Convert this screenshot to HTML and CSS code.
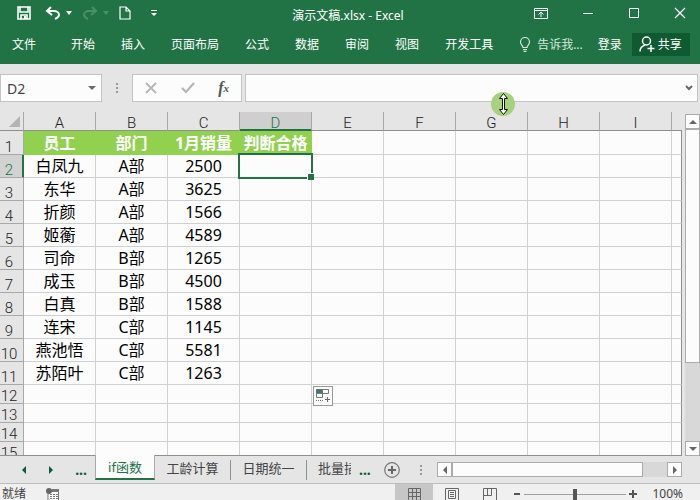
FILE: index.html
```html
<!DOCTYPE html>
<html lang="zh-CN">
<head>
    <meta charset="UTF-8">
    <meta name="viewport" content="width=device-width, initial-scale=1.0">
    <title>演示文稿.xlsx - Excel</title>
    <link rel="stylesheet" href="styles.css">
</head>
<body>

<header class="header">
    <div class="titlebar">
        <div class="quick">
            <button class="icon-btn" aria-label="保存"><svg width="14" height="14" viewBox="0 0 14 14"><path d="M1 1h12v12H1z M3 1v5h8V1 M4 13V9h6v4" fill="none" stroke="#fff" stroke-width="1.6"/><path d="M7 10h2v3H7z" fill="#fff"/></svg></button>
            <button class="icon-btn" aria-label="撤消"><svg width="16" height="14" viewBox="0 0 16 14"><path d="M6 1L2 5l5 4M2 5h7c3 0 5 2 5 4s-2 3-4 4" fill="none" stroke="#fff" stroke-width="2"/></svg></button>
            <button class="icon-btn caret" aria-label="撤消列表"><svg width="6" height="4" viewBox="0 0 6 4"><path d="M0 0h6L3 4z" fill="#fff"/></svg></button>
            <button class="icon-btn redo" aria-label="恢复"><svg width="16" height="14" viewBox="0 0 16 14"><path d="M10 1l4 4-5 4M14 5H7C4 5 2 7 2 9s2 3 4 4" fill="none" stroke="#4c9069" stroke-width="2"/></svg></button>
            <button class="icon-btn caret" aria-label="恢复列表"><svg width="6" height="4" viewBox="0 0 6 4"><path d="M0 0h6L3 4z" fill="#4c9069"/></svg></button>
            <button class="icon-btn new" aria-label="新建"><svg width="12" height="14" viewBox="0 0 12 14"><path d="M1 1h6l4 4v8H1z M7 1v4h4" fill="none" stroke="#fff" stroke-width="1.2"/></svg></button>
            <button class="icon-btn more" aria-label="自定义快速访问工具栏"><svg width="6" height="7" viewBox="0 0 6 7"><path d="M0 0h6v1H0z M0 3h6L3 6z" fill="#fff"/></svg></button>
        </div>
        <h1>演示文稿.xlsx - Excel</h1>
        <div class="window">
            <button class="icon-btn" aria-label="功能区显示选项"><svg width="14" height="11" viewBox="0 0 14 11"><path d="M.5.5h13v10H.5z M.5 2.5h13 M7 9V4 M4.500 6.500L7 4l2.500 2.500" fill="none" stroke="#fff"/></svg></button>
            <button class="icon-btn" aria-label="最小化"><svg width="12" height="12" viewBox="0 0 12 12"><path d="M1 6.500h10" stroke="#fff"/></svg></button>
            <button class="icon-btn" aria-label="最大化"><svg width="12" height="12" viewBox="0 0 12 12"><path d="M1.500 1.500h9v9h-9z" fill="none" stroke="#fff"/></svg></button>
            <button class="icon-btn" aria-label="关闭"><svg width="12" height="12" viewBox="0 0 12 12"><path d="M1 1l10 10M11 1L1 11" stroke="#fff" stroke-width="1.200"/></svg></button>
        </div>
    </div>
    <nav class="ribbon">
        <a href="#" class="file">文件</a>
        <a href="#">开始</a>
        <a href="#">插入</a>
        <a href="#">页面布局</a>
        <a href="#">公式</a>
        <a href="#">数据</a>
        <a href="#">审阅</a>
        <a href="#">视图</a>
        <a href="#">开发工具</a>
        <div class="account">
            <a href="#" class="tell"><svg width="12" height="15" viewBox="0 0 12 15"><path d="M4 10.500c0-2-2.500-2.500-2.500-5.500a4.500 4.500 0 0 1 9 0c0 3-2.500 3.500-2.500 5.500z M4 12.500h4 M4.500 14.300h3" fill="none" stroke="#d5e8dc" stroke-width="1.200"/></svg>告诉我...</a>
            <a href="#">登录</a>
            <button class="share"><svg width="16" height="16" viewBox="0 0 16 16"><circle cx="7.500" cy="5" r="4" fill="none" stroke="#fff" stroke-width="1.500"/><path d="M1 15.500c0-3.500 2-5.500 5-6.500 M12 9v7 M8.500 12.500h7" fill="none" stroke="#fff" stroke-width="1.500"/></svg>共享</button>
        </div>
    </nav>
</header>

<section class="formula">
    <div class="box name-box">
        <input type="text" value="D2" aria-label="名称框">
        <button class="icon-btn" aria-label="名称列表"><svg width="8" height="4" viewBox="0 0 8 4"><path d="M0 0h8L4 4z" fill="#6a6a6a"/></svg></button>
    </div>
    <span class="dots"></span>
    <div class="box tools">
        <button class="icon-btn" aria-label="取消"><svg width="12" height="12" viewBox="0 0 12 12"><path d="M1 1l10 10M11 1L1 11" stroke="#b5b5b5" stroke-width="1.800"/></svg></button>
        <button class="icon-btn" aria-label="输入"><svg width="14" height="12" viewBox="0 0 14 12"><path d="M1 6l4 4 8-9" fill="none" stroke="#b5b5b5" stroke-width="2.200"/></svg></button>
        <button class="icon-btn fx" aria-label="插入函数"><i>f</i><sub>x</sub></button>
    </div>
    <div class="box input-box">
        <input type="text" aria-label="编辑栏">
        <button class="icon-btn" aria-label="展开编辑栏"><svg width="8" height="6" viewBox="0 0 8 6"><path d="M1 1l3 3 3-3" fill="none" stroke="#666" stroke-width="2"/></svg></button>
    </div>
    <svg class="pointer" width="24" height="24" viewBox="0 0 24 24"><circle cx="12" cy="12" r="12" fill="#a8d17c"/><path d="M12.500 1.500l4 5h-3v11h3l-4 5-4-5h3v-11h-3z" fill="#fff" stroke="#111"/></svg>
</section>

<main class="sheet">
    <div class="grid">
        <table>
            <colgroup>
                <col class="col-num">
                <col class="col"><col class="col"><col class="col"><col class="col"><col class="col"><col class="col"><col class="col"><col class="col"><col class="col">
                <col>
            </colgroup>
            <thead>
                <tr><th class="corner"><svg width="11" height="11" viewBox="0 0 11 11"><path d="M11 0v11H0z" fill="#b4b4b4"/></svg></th><th>A</th><th>B</th><th>C</th><th class="on">D</th><th>E</th><th>F</th><th>G</th><th>H</th><th>I</th><th></th></tr>
            </thead>
            <tbody>
                <tr class="title"><th>1</th><td>员工</td><td>部门</td><td>1月销量</td><td>判断合格</td><td></td><td></td><td></td><td></td><td></td><td></td></tr>
                <tr><th class="on">2</th><td>白凤九</td><td>A部</td><td>2500</td><td class="selected"><div class="frame"></div></td><td></td><td></td><td></td><td></td><td></td><td></td></tr>
                <tr><th>3</th><td>东华</td><td>A部</td><td>3625</td><td></td><td></td><td></td><td></td><td></td><td></td><td></td></tr>
                <tr><th>4</th><td>折颜</td><td>A部</td><td>1566</td><td></td><td></td><td></td><td></td><td></td><td></td><td></td></tr>
                <tr><th>5</th><td>姬蘅</td><td>A部</td><td>4589</td><td></td><td></td><td></td><td></td><td></td><td></td><td></td></tr>
                <tr><th>6</th><td>司命</td><td>B部</td><td>1265</td><td></td><td></td><td></td><td></td><td></td><td></td><td></td></tr>
                <tr><th>7</th><td>成玉</td><td>B部</td><td>4500</td><td></td><td></td><td></td><td></td><td></td><td></td><td></td></tr>
                <tr><th>8</th><td>白真</td><td>B部</td><td>1588</td><td></td><td></td><td></td><td></td><td></td><td></td><td></td></tr>
                <tr><th>9</th><td>连宋</td><td>C部</td><td>1145</td><td></td><td></td><td></td><td></td><td></td><td></td><td></td></tr>
                <tr><th>10</th><td>燕池悟</td><td>C部</td><td>5581</td><td></td><td></td><td></td><td></td><td></td><td></td><td></td></tr>
                <tr><th>11</th><td>苏陌叶</td><td>C部</td><td>1263</td><td></td><td></td><td></td><td></td><td></td><td></td><td></td></tr>
                <tr class="short"><th>12</th><td></td><td></td><td></td><td></td><td class="anchor"><button class="fill-options" aria-label="自动填充选项"><svg width="14" height="14" viewBox="0 0 14 14"><path d="M.5.5h6v4h-6z" fill="#3d7a78" stroke="#5f6f7a"/><path d="M6.500.500h6v4h-6z M.5 4.500h6v4h-6z" fill="#fff" stroke="#777"/><path d="M0 11.500h7" stroke="#777" stroke-dasharray="1 1"/><path d="M11.500 8v5 M9 10.500h5" stroke="#666"/></svg></button></td><td></td><td></td><td></td><td></td><td></td></tr>
                <tr class="short"><th>13</th><td></td><td></td><td></td><td></td><td></td><td></td><td></td><td></td><td></td><td></td></tr>
                <tr class="short"><th>14</th><td></td><td></td><td></td><td></td><td></td><td></td><td></td><td></td><td></td><td></td></tr>
                <tr class="short"><th>15</th><td></td><td></td><td></td><td></td><td></td><td></td><td></td><td></td><td></td><td></td></tr>
            </tbody>
        </table>
    </div>
    <div class="vscroll">
        <button class="icon-btn scroll-btn" aria-label="向上"><svg width="8" height="4" viewBox="0 0 8 4"><path d="M0 4h8L4 0z" fill="#666"/></svg></button>
        <div class="track"><div class="thumb"></div></div>
        <button class="icon-btn scroll-btn" aria-label="向下"><svg width="8" height="4" viewBox="0 0 8 4"><path d="M0 0h8L4 4z" fill="#666"/></svg></button>
    </div>
</main>

<section class="tabs">
    <div class="tab-nav">
        <button class="icon-btn" aria-label="上一个"><svg width="4" height="8" viewBox="0 0 4 8"><path d="M4 0v8L0 4z" fill="#0f5a34"/></svg></button>
        <button class="icon-btn" aria-label="下一个"><svg width="4" height="8" viewBox="0 0 4 8"><path d="M0 0v8l4-4z" fill="#0f5a34"/></svg></button>
        <button class="icon-btn ellipsis">...</button>
    </div>
    <button class="tab active">if函数</button>
    <button class="tab">工龄计算</button>
    <button class="tab">日期统一</button>
    <button class="tab cut">批量插入</button>
    <button class="icon-btn ellipsis">...</button>
    <button class="icon-btn add" aria-label="新工作表"><svg width="16" height="16" viewBox="0 0 16 16"><circle cx="8" cy="8" r="7.300" fill="none" stroke="#777" stroke-width="1.200"/><path d="M8 4v8 M4 8h8" stroke="#666" stroke-width="2"/></svg></button>
    <span class="dots"></span>
    <div class="hscroll">
        <button class="icon-btn scroll-btn" aria-label="向左"><svg width="4" height="8" viewBox="0 0 4 8"><path d="M4 0v8L0 4z" fill="#666"/></svg></button>
        <div class="track"><div class="thumb"></div></div>
        <button class="icon-btn scroll-btn" aria-label="向右"><svg width="4" height="8" viewBox="0 0 4 8"><path d="M0 0v8l4-4z" fill="#666"/></svg></button>
    </div>
</section>

<footer class="status">
    <span>就绪</span>
    <button class="icon-btn macro" aria-label="录制宏"><svg width="13" height="13" viewBox="0 0 13 13"><path d="M2 2h10.500v10.500H2z" fill="#fff" stroke="#777"/><path d="M6 1h7v3H6z" fill="#777"/><path d="M4 6.500h8 M4 8.500h8 M4 10.500h8" stroke="#777" stroke-dasharray="2 1"/><circle cx="3" cy="3" r="3" fill="#666"/></svg></button>
    <div class="views">
        <button class="icon-btn on" aria-label="普通"><svg width="13" height="13" viewBox="0 0 13 13"><path d="M.5.5h12v12H.5z M4.500 0v13 M8.500 0v13 M0 4.500h13 M0 8.500h13" fill="none" stroke="#666"/></svg></button>
        <button class="icon-btn" aria-label="页面布局"><svg width="14" height="13" viewBox="0 0 14 13"><path d="M.5.5h13v12H.5z M3.500 2.500h7v8h-7z M5 4.500h4 M5 6.500h4 M5 8.500h4" fill="none" stroke="#666"/></svg></button>
        <button class="icon-btn" aria-label="分页预览"><svg width="14" height="13" viewBox="0 0 14 13"><path d="M.5.5h13v12H.5z M.5 7.500h8V.5 M4.500.500v7" fill="none" stroke="#666"/></svg></button>
    </div>
    <div class="zoom">
        <button class="icon-btn" aria-label="缩小"><svg width="8" height="8" viewBox="0 0 8 8"><path d="M1 4h6" stroke="#555" stroke-width="2"/></svg></button>
        <input type="range" min="0" max="100" value="50" aria-label="缩放">
        <button class="icon-btn" aria-label="放大"><svg width="8" height="8" viewBox="0 0 8 8"><path d="M0 4h8 M4 0v8" stroke="#555" stroke-width="2"/></svg></button>
        <span class="percent">100%</span>
    </div>
</footer>

</body>
</html>
```
FILE: styles.css
```css
* {
    box-sizing: border-box;
}
body {
    margin: 0;
    height: 100vh;
    display: flex;
    flex-direction: column;
    overflow: hidden;
    background-color: #e5e5e5;
    font-family: "Noto Sans", "Noto Sans CJK SC", sans-serif;
    font-size: 12px;
    color: #444;
}
button, input {
    font: inherit;
    color: inherit;
    margin: 0;
    padding: 0;
    border: none;
    background: none;
}
a {
    color: inherit;
    text-decoration: none;
}
.icon-btn {
    display: flex;
    align-items: center;
    justify-content: center;
    flex: none;
}

/* title bar and ribbon */
.header {
    flex: none;
    height: 64px;
    background-color: #217346;
    color: #fff;
}
.titlebar {
    display: grid;
    grid-template-columns: 1fr auto 1fr;
    align-items: center;
    height: 30px;
    padding: 0 14px 4px 10px;
}
.titlebar h1 {
    margin: 0;
    padding-top: 6px;
    font-size: 12px;
    line-height: 20px;
    font-weight: normal;
}
.quick {
    display: flex;
    align-items: center;
    padding-left: 7px;
}
.quick .icon-btn {
    margin-right: 14px;
}
.quick .icon-btn:nth-child(2),
.quick .redo {
    margin-right: 5px;
}
.quick .caret {
    margin-right: 10px;
}
.quick .new {
    margin-right: 20px;
}
.window {
    display: flex;
    justify-content: flex-end;
    gap: 34px;
}
.ribbon {
    display: flex;
    align-items: center;
    gap: 26px;
    height: 28px;
    padding: 0 13px 0 12px;
    white-space: nowrap;
}
.ribbon .file {
    margin-right: 9px;
}
.account {
    display: flex;
    align-items: center;
    gap: 10px;
    margin-left: auto;
}
.tell {
    display: flex;
    align-items: center;
    gap: 6px;
    margin-right: 5px;
    color: #d5e8dc;
}
.share {
    display: flex;
    align-items: center;
    gap: 3px;
    height: 23px;
    padding: 0 8px 0 7px;
    background-color: #0f5a30;
}

/* formula bar */
.formula {
    position: relative;
    flex: none;
    display: flex;
    height: 48px;
    padding: 10px 2px 10px 0;
}
.box {
    display: flex;
    align-items: center;
    height: 28px;
    border: 1px solid #c3c3c3;
    background-color: #fcfcfc;
}
.box input {
    flex: 1;
    min-width: 0;
    outline: none;
}
.name-box {
    width: 102px;
    padding: 0 5px 0 6px;
    font-size: 14px;
}
.dots {
    flex: none;
    width: 2px;
    height: 10px;
    background: repeating-linear-gradient(#999 0 2px, transparent 2px 4px);
}
.formula .dots {
    margin: 9px 14px 0;
}
.tools {
    width: 110px;
    padding: 0 12px;
    justify-content: space-between;
}
.fx {
    font-family: "Liberation Serif", serif;
    font-size: 16px;
    font-weight: bold;
    color: #555;
}
.fx sub {
    font-size: 11px;
    font-style: italic;
}
.input-box {
    flex: 1;
    margin-left: 3px;
    padding: 0 4px;
}
.pointer {
    position: absolute;
    left: 491px;
    top: 28px;
    z-index: 2;
}

/* sheet */
.sheet {
    flex: 1;
    min-height: 0;
    display: flex;
    gap: 3px;
}
.grid {
    flex: 1;
    overflow: hidden;
    border-bottom: 1px solid #8f8f8f;
}
table {
    table-layout: fixed;
    width: 100%;
    border-collapse: separate;
    border-spacing: 0;
}
.col-num {
    width: 24px;
}
.col {
    width: 72px;
}
th, td {
    height: 23px;
    padding: 0;
    border-right: 1px solid #d0d0d0;
    border-bottom: 1px solid #d0d0d0;
    text-align: center;
    white-space: nowrap;
}
td {
    background-color: #fcfcfc;
    color: #000;
    font-size: 16px;
    line-height: 20px;
}
td:last-child {
    border-right-color: #8f8f8f;
}
th {
    font-family: Roboto, sans-serif;
    font-size: 15px;
    line-height: 14px;
    font-weight: 300;
    color: #222;
}
thead th {
    height: 19px;
    border-color: #a8a8a8;
    border-bottom-color: #8f8f8f;
    vertical-align: bottom;
}
thead th:last-child {
    border-right: none;
}
thead .on {
    background-color: #cfcfcf;
    border-bottom-color: #217346;
    box-shadow: inset 0 -1px #217346;
    color: #217346;
}
.corner svg {
    display: block;
    margin: 0 3px 3px auto;
}
tbody th {
    padding-right: 5px;
    border-color: #a8a8a8;
    vertical-align: bottom;
}
tbody .on {
    background-color: #d2d2d2;
    border-right-color: #217346;
    box-shadow: inset -1px 0 #217346;
    color: #217346;
}
.title th, .title td {
    height: 24px;
}
.title td:nth-child(-n+5) {
    background-color: #92d050;
    border-color: #92d050;
    color: #fff;
    font-weight: bold;
}
.short th, .short td {
    height: 19px;
}
.selected, .anchor {
    position: relative;
}
.frame {
    position: absolute;
    inset: -2px;
    z-index: 1;
    border: 2px solid #217346;
}
.frame::after {
    content: "";
    position: absolute;
    right: -3px;
    bottom: -3px;
    width: 6px;
    height: 6px;
    border: 1px solid #fcfcfc;
    border-width: 1px 0 0 1px;
    background-color: #217346;
}
.fill-options {
    position: absolute;
    left: 1px;
    top: 1px;
    z-index: 1;
    display: flex;
    align-items: center;
    justify-content: center;
    width: 20px;
    height: 20px;
    border: 1px solid #999;
    background-color: #fcfcfc;
}

/* scroll bars */
.vscroll {
    display: flex;
    flex-direction: column;
    width: 15px;
    padding-top: 2px;
}
.scroll-btn {
    width: 15px;
    height: 15px;
    border: 1px solid #ababab;
    background-color: #fcfcfc;
}
.track {
    flex: 1;
    background-color: #d8d8d8;
}
.thumb {
    border: 1px solid #ababab;
    background-color: #fcfcfc;
}
.vscroll .thumb {
    height: 75%;
}
.hscroll {
    display: flex;
    width: 35%;
    height: 15px;
    margin: 0 18px 0 auto;
}
.hscroll .thumb {
    width: 89%;
    height: 15px;
}

/* sheet tabs */
.tabs {
    flex: none;
    display: flex;
    align-items: center;
    height: 27px;
    white-space: nowrap;
}
.tab-nav {
    display: flex;
    align-items: center;
    justify-content: space-between;
    width: 95px;
    padding: 0 8px 0 22px;
}
.ellipsis {
    color: #0f5a34;
    font-size: 14px;
    font-weight: bold;
    line-height: 16px;
}
.tab {
    flex: none;
    width: 76px;
    height: 20px;
    padding-bottom: 4px;
    border-right: 1px solid #8f8f8f;
    font-size: 13px;
    line-height: 16px;
}
.tab.active {
    position: relative;
    align-self: flex-start;
    width: 60px;
    height: 25px;
    margin-top: -1px;
    padding-bottom: 0;
    border-right: 1px solid #a8a8a8;
    border-left: 1px solid #a8a8a8;
    border-bottom: 2px solid #217346;
    background-color: #fcfcfc;
    color: #217346;
}
.tab.cut {
    width: 44px;
    padding-left: 11px;
    border-right: none;
    overflow: hidden;
    text-align: left;
}
.tab.cut + .ellipsis {
    margin: 0 13px 0 8px;
}
.tabs .dots {
    margin-left: 20px;
}

/* status bar */
.status {
    flex: none;
    display: flex;
    align-items: flex-start;
    height: 17px;
    padding: 0 17px 0 2px;
    border-top: 1px solid #bdbdbd;
    background-color: #f0f0f0;
    line-height: 20px;
    overflow: hidden;
}
.status .icon-btn {
    height: 20px;
}
.macro {
    margin-left: 20px;
}
.views {
    display: flex;
    margin-left: auto;
}
.views .icon-btn {
    width: 38px;
}
.views .on {
    background-color: #c6c6c6;
}
.zoom {
    display: flex;
    align-items: center;
    gap: 3px;
    margin-left: 4px;
}
.zoom input {
    appearance: none;
    width: 102px;
    height: 20px;
    background: linear-gradient(#a0a0a0, #a0a0a0) center / 100% 1px no-repeat;
}
.zoom input::-webkit-slider-thumb {
    appearance: none;
    width: 4px;
    height: 11px;
    background-color: #555;
}
.percent {
    margin-left: 12px;
}
```
